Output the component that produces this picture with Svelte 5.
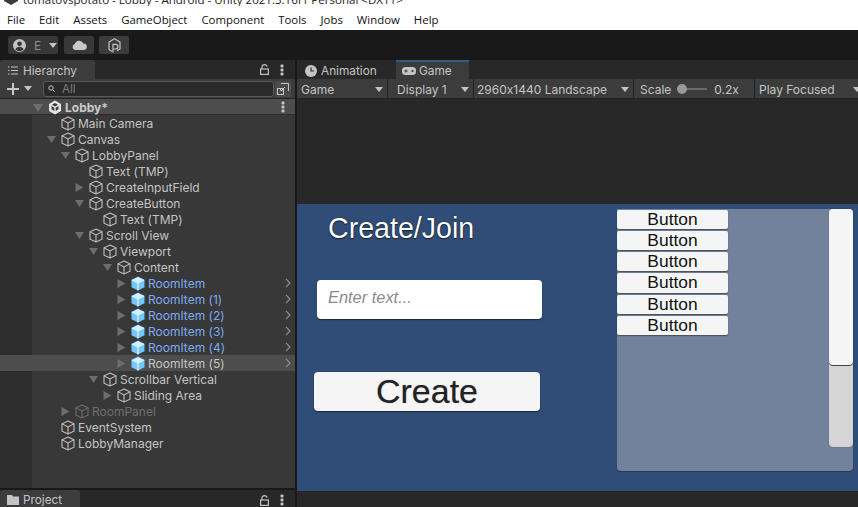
<script lang="ts">
  const menus = ['File', 'Edit', 'Assets', 'GameObject', 'Component', 'Tools', 'Jobs', 'Window', 'Help']

  interface Row {
    name: string
    depth: number
    arrow?: 'open' | 'closed'
    kind?: 'prefab' | 'off'
    hover?: boolean
    more?: boolean
  }

  const rows: Row[] = [
    { name: 'Main Camera', depth: 0 },
    { name: 'Canvas', depth: 0, arrow: 'open' },
    { name: 'LobbyPanel', depth: 1, arrow: 'open' },
    { name: 'Text (TMP)', depth: 2 },
    { name: 'CreateInputField', depth: 2, arrow: 'closed' },
    { name: 'CreateButton', depth: 2, arrow: 'open' },
    { name: 'Text (TMP)', depth: 3 },
    { name: 'Scroll View', depth: 2, arrow: 'open' },
    { name: 'Viewport', depth: 3, arrow: 'open' },
    { name: 'Content', depth: 4, arrow: 'open' },
    { name: 'RoomItem', depth: 5, arrow: 'closed', kind: 'prefab', more: true },
    { name: 'RoomItem (1)', depth: 5, arrow: 'closed', kind: 'prefab', more: true },
    { name: 'RoomItem (2)', depth: 5, arrow: 'closed', kind: 'prefab', more: true },
    { name: 'RoomItem (3)', depth: 5, arrow: 'closed', kind: 'prefab', more: true },
    { name: 'RoomItem (4)', depth: 5, arrow: 'closed', kind: 'prefab', more: true },
    { name: 'RoomItem (5)', depth: 5, arrow: 'closed', kind: 'prefab', more: true, hover: true },
    { name: 'Scrollbar Vertical', depth: 3, arrow: 'open' },
    { name: 'Sliding Area', depth: 4, arrow: 'closed' },
    { name: 'RoomPanel', depth: 1, arrow: 'closed', kind: 'off' },
    { name: 'EventSystem', depth: 0 },
    { name: 'LobbyManager', depth: 0 },
  ]

  const roomButtons = [0, 1, 2, 3, 4, 5]
</script>

{#snippet lock()}
  <svg class="lock" width="9" height="11" viewBox="0 0 9 11" fill="none" stroke="#c4c4c4" stroke-width="1.2">
    <rect x="0.6" y="5" width="7.8" height="5.4" />
    <path d="M2 5V2.800a2.500 2.200 0 0 1 5 0" />
  </svg>
{/snippet}

{#snippet dots()}
  <svg class="dots" width="4" height="12" viewBox="0 0 4 12" fill="#c4c4c4">
    <rect x="0.5" y="0.5" width="3" height="3" rx="1" />
    <rect x="0.5" y="4.5" width="3" height="3" rx="1" />
    <rect x="0.5" y="8.5" width="3" height="3" rx="1" />
  </svg>
{/snippet}

{#snippet caret()}
  <svg class="caret" width="8" height="5" viewBox="0 0 8 5" fill="#c4c4c4"><path d="M0 0h8L4 5z" /></svg>
{/snippet}

{#snippet cube(kind?: string)}
  {#if kind === 'prefab'}
    <svg class="cube" width="14" height="15" viewBox="0 0 14 15">
      <path d="M7 0.5 13.500 3.700v7.600L7 14.500 0.500 11.300V3.700z" fill="#73c8fb" />
      <path d="M1 4 7 7l6-3M7 7v7.500" fill="none" stroke="#eaf7ff" stroke-width="1.100" />
      <path d="M7 1.200 12.200 3.800 7 6.300 1.800 3.800z" fill="#d9f1ff" />
    </svg>
  {:else}
    <svg class="cube" width="14" height="15" viewBox="0 0 14 15" fill="none" stroke={kind === 'off' ? '#6f6f6f' : '#c6c6c6'} stroke-width="1.050">
      <path d="M7 1 13 3.900v7.200L7 14 1 11.100V3.900z" />
      <path d="M1 3.900 7 7l6-3.100M7 7v7" />
    </svg>
  {/if}
{/snippet}

<div class="app">
  <div class="title">
    <svg class="title-logo" width="14" height="14" viewBox="0 0 14 14"><path d="M7-7 14 0V1L7 5 0 1V0z" fill="#3a3a3a" /></svg>
    <span>tomatovspotato - Lobby - Android - Unity 2021.3.16f1 Personal &lt;DX11&gt;</span>
  </div>

  <nav class="menu">
    {#each menus as m}<span>{m}</span>{/each}
  </nav>

  <div class="topbar">
    <div class="tb account">
      <svg width="13" height="13" viewBox="0 0 13 13">
        <circle cx="6.500" cy="6.500" r="6.500" fill="#c4c4c4" />
        <circle cx="6.500" cy="4.800" r="2.300" fill="#383838" />
        <path d="M2.400 10.600c.6-2 2.200-2.800 4.100-2.800s3.500.8 4.100 2.800a6 6 0 0 1-8.200 0z" fill="#383838" />
      </svg>
      <span>E</span>
      {@render caret()}
    </div>
    <div class="tb cloud">
      <svg width="15" height="10" viewBox="0 0 15 10" fill="#c8c8c8">
        <path d="M3.400 10a3 3 0 0 1-.6-5.900A4.600 4.600 0 0 1 11.400 3.400 3.300 3.300 0 0 1 11.600 10z" />
      </svg>
    </div>
    <div class="tb collab">
      <svg width="13" height="15" viewBox="0 0 13 15" fill="none" stroke="#c4c4c4" stroke-width="1.200">
        <path d="M6.500 .8 12 4v7l-3 1.800M4 13.500 1 11.500V4l5.500-3.200" />
        <path d="M5 14.500V6.300h2.600a2 2 0 0 1 0 4.700H5" />
      </svg>
    </div>
  </div>

  <div class="main">
    <section class="hierarchy">
      <div class="tabs">
        <div class="tab active hier-tab">
          <svg width="10" height="9" viewBox="0 0 10 9" stroke="#c4c4c4" fill="none">
            <path d="M3 1h7M3 4.500h7M3 8h7" />
            <path d="M0 1h1.500M0 4.500h1.500M0 8h1.500" />
          </svg>
          <span>Hierarchy</span>
        </div>
        <div class="tab-tools">{@render lock()}{@render dots()}</div>
      </div>

      <div class="hier-tools">
        <svg class="plus" width="12" height="12" viewBox="0 0 12 12" fill="#c8c8c8"><path d="M5 0h2v5h5v2H7v5H5V7H0V5h5z" /></svg>
        {@render caret()}
        <div class="search">
          <svg width="9" height="8" viewBox="0 0 9 8" fill="none" stroke="#c4c4c4">
            <circle cx="3" cy="3" r="2.200" />
            <path d="M4.600 4.600 6.800 6.800" />
          </svg>
          <span>All</span>
        </div>
        <div class="scene-btn">
          <svg width="12" height="12" viewBox="0 0 12 12" fill="none" stroke="#c4c4c4">
            <path d="M4 .5h7.500V8M8 4 4.500 7.500M5.500 7.500h-2v-2" />
            <rect x=".5" y="5.500" width="6" height="6" />
          </svg>
        </div>
      </div>

      <div class="tree">
        <div class="row scene">
          <svg class="arrow" width="10" height="8" viewBox="0 0 10 8" fill="#6d6d6d"><path d="M0 0h10L5 8z" /></svg>
          <svg class="cube" width="14" height="15" viewBox="0 0 14 15">
            <path d="M7 .5 13 4v7l-6 3.500L1 11V4z" fill="#e4e4e4" />
            <path d="M7 3 10 4.800 7 6.500 4 4.800zM3.500 6 6.300 7.700V11L3.500 9.300zM10.500 6 7.700 7.700V11L10.500 9.300z" fill="#3d3d3d" />
          </svg>
          <b>Lobby*</b>
          <span class="row-dots">{@render dots()}</span>
        </div>
        {#each rows as r}
          <div class="row" class:hover={r.hover} class:prefab={r.kind === 'prefab'} class:off={r.kind === 'off'} style="padding-left: {47 + r.depth * 14}px">
            {#if r.arrow === 'open'}
              <svg class="arrow" width="9" height="7" viewBox="0 0 9 7" fill="#6d6d6d"><path d="M0 0h9L4.500 7z" /></svg>
            {:else if r.arrow === 'closed'}
              <svg class="arrow" width="8" height="9" viewBox="0 0 8 9" fill="#6d6d6d"><path d="M0 0l8 4.500L0 9z" /></svg>
            {:else}
              <span class="arrow"></span>
            {/if}
            {@render cube(r.kind)}
            <span>{r.name}</span>
            {#if r.more}
              <svg class="more" width="6" height="10" viewBox="0 0 6 10" fill="none" stroke="#8e8e8e" stroke-width="1.200"><path d="M1 .8 5 5 1 9.200" /></svg>
            {/if}
          </div>
        {/each}
      </div>

      <div class="project-bar">
        <div class="tab active project-tab">
          <svg width="12" height="10" viewBox="0 0 12 10" fill="#c4c4c4"><path d="M0 0h5l1 1.500h6V10H0z" /></svg>
          <span>Project</span>
        </div>
        <div class="tab-tools">{@render lock()}{@render dots()}</div>
      </div>
    </section>

    <section class="game">
      <div class="tabs">
        <div class="tab anim-tab">
          <svg width="12" height="12" viewBox="0 0 12 12">
            <circle cx="6" cy="6" r="6" fill="#c4c4c4" />
            <path d="M6 2.500V6h3" fill="none" stroke="#282828" stroke-width="1.200" />
          </svg>
          <span>Animation</span>
        </div>
        <div class="tab active game-tab">
          <svg width="14" height="8" viewBox="0 0 14 8">
            <rect width="14" height="8" rx="3.500" fill="#c4c4c4" />
            <path d="M2.500 4h3M4 2.500v3" stroke="#383838" />
            <circle cx="10.500" cy="4" r="1.100" fill="#383838" />
          </svg>
          <span>Game</span>
        </div>
      </div>

      <div class="game-tools">
        <div class="gt g1"><span>Game</span>{@render caret()}</div>
        <div class="gt g2"><span>Display 1</span>{@render caret()}</div>
        <div class="gt g3"><span>2960x1440 Landscape</span>{@render caret()}</div>
        <div class="gt g4">
          <span>Scale</span>
          <i class="slider"><i class="knob"></i></i>
          <span>0.2x</span>
        </div>
        <div class="gt g5"><span>Play Focused</span>{@render caret()}</div>
      </div>

      <div class="letterbox"></div>

      <div class="canvas">
        <div class="heading">Create/Join</div>
        <div class="input">Enter text...</div>
        <div class="create">Create</div>
        <div class="list">
          <div class="rooms">
            {#each roomButtons as b (b)}
              <div class="room">Button</div>
            {/each}
          </div>
          <div class="scrollbar"><div class="handle"></div></div>
        </div>
      </div>

      <div class="game-foot"></div>
    </section>
  </div>
</div>

<style>
  :global(body) {
    margin: 0;
    overflow: hidden;
    background: #191919;
  }

  .app {
    width: 858px;
    height: 507px;
    display: flex;
    flex-direction: column;
    overflow: hidden;
    font-family: Inter, "Noto Sans", sans-serif;
    font-size: 12px;
    font-feature-settings: "calt" 0;
    color: #c4c4c4;
  }

  .title {
    height: 6px;
    flex: none;
    background: #fff;
    overflow: hidden;
    display: flex;
    gap: 5px;
    padding-left: 4px;
    color: #222;
    font: 11.55px/1 "Open Sans", sans-serif;
  }

  .title span {
    margin-top: -6px;
    white-space: nowrap;
  }

  .title-logo {
    flex: none;
  }

  .menu {
    height: 24px;
    flex: none;
    box-sizing: border-box;
    padding: 3px 0 0 7px;
    background: #fff;
    display: flex;
    align-items: center;
    gap: 14px;
    color: #111;
    font: 11.4px "Open Sans", sans-serif;
  }

  .topbar {
    height: 30px;
    flex: none;
    background: #191919;
    display: flex;
    align-items: center;
    gap: 6px;
    padding-left: 8px;
  }

  .tb {
    height: 18px;
    background: #383838;
    border-radius: 2px;
    display: flex;
    align-items: center;
    justify-content: center;
  }

  .account {
    width: 50px;
    gap: 8px;
    justify-content: flex-start;
    padding-left: 5px;
    box-sizing: border-box;
    color: #8e8e8e;
  }

  .cloud,
  .collab {
    width: 30px;
  }

  .collab {
    margin-left: -1px;
    background: #3c3c3c;
  }

  .main {
    flex: 1;
    display: flex;
    min-height: 0;
    gap: 2px;
  }

  .hierarchy {
    width: 295px;
    flex: none;
    display: flex;
    flex-direction: column;
  }

  .game {
    flex: 1;
    min-width: 0;
    display: flex;
    flex-direction: column;
    overflow: hidden;
  }

  .tabs {
    height: 19px;
    flex: none;
    background: #282828;
    display: flex;
    align-items: stretch;
    position: relative;
  }

  .tab {
    display: flex;
    align-items: center;
    gap: 4px;
    box-sizing: border-box;
    padding-top: 2px;
    font-size: 11.8px;
    white-space: nowrap;
  }

  .tab.active {
    background: #3c3c3c;
  }

  .hier-tab {
    width: 95px;
    padding-left: 8px;
    gap: 5px;
    border-radius: 3px 3px 0 0;
  }

  .anim-tab {
    width: 99px;
    padding-left: 8px;
  }

  .game-tab {
    width: 73px;
    padding-left: 6px;
    padding-top: 0;
    gap: 3px;
    border-top: 2px solid #2f5d87;
  }

  .tab-tools {
    margin-left: auto;
    display: flex;
    align-items: center;
    gap: 11px;
    padding-right: 11px;
  }

  .hier-tools {
    height: 20px;
    flex: none;
    background: #3c3c3c;
    box-sizing: border-box;
    border-bottom: 1px solid #232323;
    display: flex;
    align-items: center;
    padding-left: 7px;
  }

  .plus {
    margin-right: 5px;
  }

  .search {
    margin-left: 11px;
    width: 231px;
    height: 16px;
    box-sizing: border-box;
    background: #2a2a2a;
    border: 1px solid #5a5a5a;
    border-radius: 3px;
    display: flex;
    align-items: center;
    gap: 5px;
    padding-left: 4px;
    color: #7c7c7c;
    font-size: 11.5px;
  }

  .scene-btn {
    width: 16px;
    height: 16px;
    margin-left: 1px;
    background: #4a4a4a;
    border-radius: 2px;
    display: flex;
    align-items: center;
    justify-content: center;
  }

  .tree {
    flex: 1;
    min-height: 0;
    background: linear-gradient(to right, #2d2d2d 32px, #383838 32px);
  }

  .row {
    height: 16px;
    box-sizing: border-box;
    display: flex;
    align-items: center;
    white-space: nowrap;
    position: relative;
  }

  .row.scene {
    background: #4d4d4d;
    padding: 1px 0 0 33px;
    box-shadow: inset 0 -1px 0 #2e2e2e;
    color: #c9c9c9;
  }

  .row.scene b {
    margin-left: 0;
    font-weight: 700;
  }

  .row.scene .arrow {
    width: 10px;
    margin-right: 5px;
  }

  .row-dots {
    position: absolute;
    right: 10px;
    top: 2px;
  }

  .row.hover {
    background: #4d4d4d;
    color: #c4c4c4;
  }

  .row.prefab:not(.hover) {
    color: #7baaf0;
  }

  .row.off {
    color: #6f6f6f;
  }

  .arrow {
    display: block;
    width: 9px;
    flex: none;
    margin-right: 5px;
  }

  .cube {
    flex: none;
    margin-right: 3px;
  }

  .more {
    position: absolute;
    right: 4px;
    top: 3px;
  }

  .project-bar {
    height: 17px;
    flex: none;
    margin-top: 2px;
    background: #282828;
    display: flex;
    align-items: stretch;
  }

  .project-tab {
    width: 80px;
    padding: 3px 0 0 7px;
    border-radius: 3px 3px 0 0;
  }

  .project-bar .tab-tools {
    padding-top: 3px;
  }

  .game-tools {
    height: 20px;
    flex: none;
    display: flex;
    gap: 1px;
    background: #232323;
    box-sizing: border-box;
    border-bottom: 1px solid #232323;
  }

  .gt {
    background: #3c3c3c;
    display: flex;
    align-items: center;
    justify-content: space-between;
    box-sizing: border-box;
    padding: 1px 4px 0 4px;
    white-space: nowrap;
    flex: none;
  }

  .gt :global(.caret) {
    flex: none;
  }

  .g1 { width: 90px; }
  .g2 { width: 85px; padding-left: 9px; }
  .g3 { width: 159px; padding-left: 3px; }
  .g4 { width: 120px; padding-left: 6px; justify-content: flex-start; }
  .g5 { width: 110px; padding-left: 4px; }

  .slider {
    display: block;
    position: relative;
    width: 30px;
    height: 2px;
    margin: 0 7px 0 6px;
    background: #6b6b6b;
  }

  .knob {
    position: absolute;
    left: 0;
    top: -4px;
    width: 10px;
    height: 10px;
    border-radius: 50%;
    background: #999;
  }

  .letterbox {
    height: 105px;
    flex: none;
    background: #282828;
  }

  .canvas {
    height: 287px;
    flex: none;
    position: relative;
    background: #2f4d76;
    font-family: "Liberation Sans", Arial, sans-serif;
  }

  .game-foot {
    flex: 1;
    background: #282828;
  }

  .heading {
    position: absolute;
    left: 31px;
    top: 7px;
    color: #fff;
    font-size: 28.6px;
    line-height: 34px;
    text-shadow: 0 0 1px #000, 0 1px 1px #0008;
    white-space: nowrap;
  }

  .input {
    position: absolute;
    left: 20px;
    top: 76px;
    width: 225px;
    height: 39px;
    box-sizing: border-box;
    padding-left: 11px;
    background: #fff;
    border-radius: 4px;
    box-shadow: 0 1px 1px #0007;
    color: #8b8b8b;
    font-style: italic;
    font-size: 16.4px;
    line-height: 34px;
  }

  .create {
    position: absolute;
    left: 17px;
    top: 168px;
    width: 226px;
    height: 39px;
    background: #f5f5f5;
    border-radius: 4px;
    box-shadow: 0 0 1px #0009, 0 1px 1px #0007;
    color: #222;
    font-size: 34px;
    line-height: 39px;
    text-align: center;
    text-shadow: 0 0 1px #2226;
  }

  .list {
    position: absolute;
    left: 320px;
    top: 5px;
    width: 236px;
    height: 262px;
    background: #72829c;
    border-radius: 0 4px 4px 4px;
    box-shadow: 0 1px 1px #0004;
  }

  .rooms {
    width: 111px;
    padding-top: 0.5px;
    display: flex;
    flex-direction: column;
    gap: 2px;
  }

  .room {
    height: 19.33px;
    background: #f5f5f5;
    border-radius: 2px;
    box-shadow: 0 1px 1px #0006;
    color: #111;
    font-size: 17.4px;
    line-height: 18px;
    text-align: center;
  }

  .scrollbar {
    position: absolute;
    left: 212px;
    top: 0;
    width: 24px;
    height: 238px;
    background: #d5d5d5;
    border-radius: 4px;
    box-shadow: 0 0 1px #0008;
  }

  .handle {
    height: 156px;
    background: #f5f5f5;
    border-radius: 4px;
    box-shadow: 0 1px 0 #444;
  }
</style>
